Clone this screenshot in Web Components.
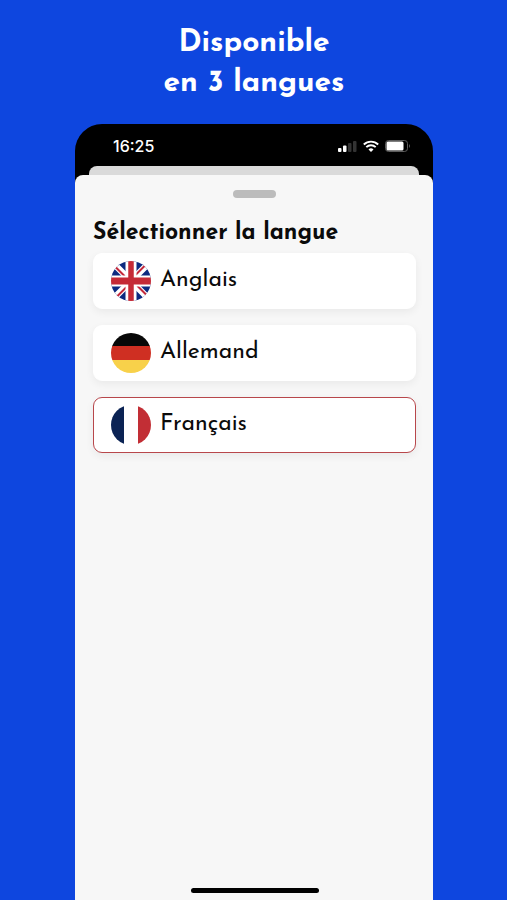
<!DOCTYPE html>
<html lang="fr">
<head>
<meta charset="utf-8">
<meta name="viewport" content="width=device-width, initial-scale=1">
<title>Disponible en 3 langues</title>
<style>
html, body { margin: 0; }
body { background: #0e46df; font-family: "Josefin Sans", Lato, sans-serif; color: #0b0b0b; }
</style>
</head>
<body>
<promo-screen>
  <span slot="title">Disponible<br>en 3 langues</span>
  <phone-frame>
    <status-bar slot="status" time="16:25"></status-bar>
    <bottom-sheet>
      <language-picker heading="Sélectionner la langue"></language-picker>
    </bottom-sheet>
  </phone-frame>
</promo-screen>
<script>
class BaseElement extends HTMLElement {
  connectedCallback() {
    if (!this.shadowRoot) this.attachShadow({ mode: "open" }).innerHTML = this.render();
  }
}

customElements.define("promo-screen", class extends BaseElement {
  render() {
    return `<style>
      :host { display: flex; flex-direction: column; min-height: 100vh; box-sizing: border-box; padding: 24px 74px 0 75px; }
      h1 { margin: 0 0 20px; color: #fff; text-align: center; font-size: 30px; line-height: 40px; font-weight: 700; white-space: nowrap; }
      ::slotted(phone-frame) { flex: 1; }
    </style><h1><slot name="title"></slot></h1><slot></slot>`;
  }
});

customElements.define("phone-frame", class extends BaseElement {
  render() {
    return `<style>
      :host { display: flex; flex-direction: column; background: linear-gradient(#000 100px, #f7f7f7 100px); border-radius: 27px 27px 0 0; overflow: hidden; }
      .behind { height: 9px; margin: 0 14px; background: #dadada; border-radius: 8px 8px 0 0; }
      ::slotted(bottom-sheet) { flex: 1; }
    </style><slot name="status"></slot><div class="behind"></div><slot></slot>`;
  }
});

customElements.define("status-bar", class extends BaseElement {
  render() {
    return `<style>
      :host { display: flex; align-items: center; justify-content: space-between; height: 42px; box-sizing: border-box; padding: 2px 22px 0 38px; color: #fff; font: 500 16px/20px Inter, sans-serif; }
      .icons { display: flex; align-items: center; gap: 6px; }
      svg { display: block; }
    </style>
    <time>${this.getAttribute("time")}</time>
    <div class="icons">
      <svg width="19" height="12" viewBox="0 0 19 12" aria-label="Réseau">
        <rect x="0" y="8" width="3.5" height="4" rx="1" fill="#fff"/><rect x="5" y="5.5" width="3.5" height="6.5" rx="1" fill="#fff"/>
        <rect x="10" y="3" width="3.5" height="9" rx="1" fill="#333"/><rect x="15" y="1" width="3.5" height="11" rx="1" fill="#333"/>
      </svg>
      <svg width="16" height="12" viewBox="0 0 16 12" fill="none" stroke="#fff" stroke-width="1.9" aria-label="Wi-Fi">
        <path d="M.8 4.5A10.4 10.4 0 0 1 15.2 4.5M3.3 7.1A6.8 6.8 0 0 1 12.7 7.1"/><path d="M5.5 9.4A3.6 3.6 0 0 1 10.5 9.4L8 12Z" fill="#fff" stroke="none"/>
      </svg>
      <svg width="26" height="12" viewBox="0 0 26 12" aria-label="Batterie">
        <rect x=".5" y=".5" width="22" height="11" rx="3" fill="none" stroke="#5c5c5c"/><rect x="1.5" y="1.5" width="17" height="9" rx="1.5" fill="#fff"/><path d="M24 4Q26 6 24 8Z" fill="#5c5c5c"/>
      </svg>
    </div>`;
  }
});

customElements.define("bottom-sheet", class extends BaseElement {
  render() {
    return `<style>
      :host { display: flex; flex-direction: column; background: #f7f7f7; border-radius: 8px 8px 0 0; padding: 15px 17px 7px 18px; }
      .grip { width: 43px; height: 8px; border-radius: 4px; background: #bcbcbc; align-self: center; }
      .content { flex: 1; margin-top: 22px; }
      .home { width: 128px; height: 5px; border-radius: 3px; background: #000; align-self: center; }
    </style><div class="grip"></div><div class="content"><slot></slot></div><div class="home"></div>`;
  }
});

customElements.define("flag-icon", class extends BaseElement {
  render() {
    const art = {
      en: `<rect width="40" height="40" fill="#0c2a80"/>
        <path d="M2 2 38 38M38 2 2 38" stroke="#fff" stroke-width="6.5"/>
        <path d="M2 3.5 18 19.5M36.5 2 21 17.5M3.5 38 19 22.5M38 36.5 22 20.5" stroke="#c4283a" stroke-width="2"/>
        <path d="M20 0V40M0 20H40" stroke="#fff" stroke-width="11"/><path d="M20 0V40" stroke="#c52a36" stroke-width="5.5"/><path d="M0 20H40" stroke="#c52a36" stroke-width="7"/>`,
      de: `<rect width="40" height="14" fill="#080808"/><rect y="13" width="40" height="14" fill="#cf2f22"/><rect y="27" width="40" height="13" fill="#f8d14a"/>`,
      fr: `<rect width="40" height="40" fill="#fff"/><rect width="13" height="40" fill="#0b2354"/><rect x="27" width="13" height="40" fill="#c22e35"/>`
    }[this.getAttribute("code")];
    return `<style>:host { display: block; width: 40px; height: 40px; border-radius: 50%; overflow: hidden; flex: none; } svg { display: block; }</style>
      <svg width="40" height="40" viewBox="0 0 40 40" aria-hidden="true">${art}</svg>`;
  }
});

customElements.define("language-picker", class extends BaseElement {
  render() {
    const items = [["en", "Anglais"], ["de", "Allemand"], ["fr", "Français"]];
    return `<style>
      :host { display: block; }
      fieldset { border: 0; margin: 0; padding: 0; min-width: 0; display: grid; gap: 16px; }
      legend { padding: 0; font-size: 23px; line-height: 28px; font-weight: 700; margin-bottom: 5px; white-space: nowrap; }
      label { display: flex; align-items: center; gap: 9px; height: 56px; box-sizing: border-box; padding: 0 17px; border: 1px solid #fff; border-radius: 9px; background: #fff; box-shadow: 0 3px 8px rgba(0,0,0,.06); font-size: 23px; line-height: 28px; cursor: pointer; }
      label:has(input:checked) { border-color: #b8474b; }
      label:has(input:focus-visible) { outline: 2px solid #0e46df; }
      input { appearance: none; position: absolute; margin: 0; width: 1px; height: 1px; }
    </style>
    <fieldset><legend>${this.getAttribute("heading")}</legend>
      ${items.map(([c, n]) => `<label><input type="radio" name="lang" value="${c}"${c === "fr" ? " checked" : ""}><flag-icon code="${c}"></flag-icon><span>${n}</span></label>`).join("")}
    </fieldset>`;
  }
});
</script>
</body>
</html>
